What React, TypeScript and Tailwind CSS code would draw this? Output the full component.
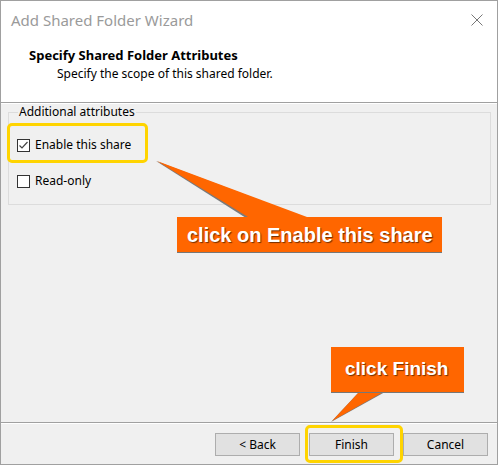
import React from "react";

const ui = { fontFamily: '"Noto Sans", "Open Sans", sans-serif' };
const arial = { fontFamily: '"Liberation Sans", Arial, sans-serif' };

function Check({ checked }: { checked: boolean }) {
  return (
    <div className="w-[13px] h-[13px] border border-[#333333] bg-white flex items-center justify-center shrink-0">
      {checked && (
        <svg width="11" height="11" viewBox="0 0 11 11">
          <path d="M1.5 5.5 L4 8 L9.5 2" fill="none" stroke="#444" strokeWidth="1.2" />
        </svg>
      )}
    </div>
  );
}

function Btn({ children }: { children: React.ReactNode }) {
  return (
    <div className="w-[85px] h-[23px] bg-[#e1e1e1] border border-[#adadad] flex items-center justify-center text-[12px] text-black">
      {children}
    </div>
  );
}

export default function App() {
  return (
    <div className="relative w-[499px] h-[465px] bg-white overflow-hidden" style={ui}>
      <div className="w-[498px] h-[465px] border border-[#a0a0a0] flex flex-col">
        {/* header */}
        <div className="h-[102px] bg-white border-b border-[#a0a0a0] flex flex-col">
          <div className="h-[38px] flex items-center justify-between pl-[10px] pr-[14px]">
            <span className="text-[15px] text-[#9a9a9a]">Add Shared Folder Wizard</span>
            <svg width="12" height="12" viewBox="0 0 12 12">
              <path d="M0.5 0.5 L11.5 11.5 M11.5 0.5 L0.5 11.5" stroke="#777" strokeWidth="1" />
            </svg>
          </div>
          <div className="pl-[28px] mt-[8px] text-[13px] font-bold text-black leading-[17px]">
            Specify Shared Folder Attributes
          </div>
          <div className="pl-[56px] mt-[2px] text-[12px] text-black leading-[16px]">
            Specify the scope of this shared folder.
          </div>
        </div>
        {/* body */}
        <div className="h-[319px] bg-[#f0f0f0] border-t border-white pt-[0px]">
          <fieldset className="ml-[7px] w-[483px] h-[101px] border border-[#dcdcdc] pl-[8px]">
            <legend className="ml-[1px] px-[1px] text-[12px] leading-[16px] text-black">Additional attributes</legend>
            <div className="flex items-center gap-[5px] mt-[17px] h-[16px]">
              <Check checked />
              <span className="text-[12px] text-black">Enable this share</span>
            </div>
            <div className="flex items-center gap-[5px] mt-[20px] h-[16px]">
              <Check checked={false} />
              <span className="text-[12px] text-black">Read-only</span>
            </div>
          </fieldset>
        </div>
        {/* footer */}
        <div className="h-[42px] bg-[#f0f0f0] border-t border-[#a0a0a0]">
          <div className="border-t border-white h-full flex justify-end items-start gap-[9px] pr-[9px] pt-[9px]">
            <Btn>&lt; Back</Btn>
            <Btn>Finish</Btn>
            <Btn>Cancel</Btn>
          </div>
        </div>
      </div>

      {/* overlays */}
      <div className="absolute left-[7px] top-[123px] w-[141px] h-[40px] border-[3px] border-[#ffd400] rounded-[5px]" />
      <div className="absolute left-[305px] top-[425px] w-[98px] h-[38px] border-[3px] border-[#ffd400] rounded-[5px]" />

      <svg className="absolute left-0 top-0" width="499" height="465" viewBox="0 0 499 465">
        <polygon points="156,161 246,218 307,218" fill="#7a7a7a" />
        <polygon points="157,161 248,217 307,217" fill="#ff6600" />
        <polygon points="331,422 359,392 385,392" fill="#7a7a7a" />
        <polygon points="332,421 360,391 385,391" fill="#ff6600" />
      </svg>

      <div
        className="absolute left-[177px] top-[217px] w-[265px] h-[35px] bg-[#ff6600] shadow-[0_1px_0_#777] flex items-center pl-[10px] text-[20px] font-bold text-white [text-shadow:1px_1px_1px_rgba(0,0,0,0.55)]"
        style={arial}
      >
        click on Enable this share
      </div>
      <div
        className="absolute left-[331px] top-[347px] w-[133px] h-[45px] bg-[#ff6600] shadow-[0_1px_0_#777] flex items-center pl-[14px] text-[19px] font-bold text-white [text-shadow:1px_1px_1px_rgba(0,0,0,0.55)]"
        style={arial}
      >
        click Finish
      </div>
    </div>
  );
}
